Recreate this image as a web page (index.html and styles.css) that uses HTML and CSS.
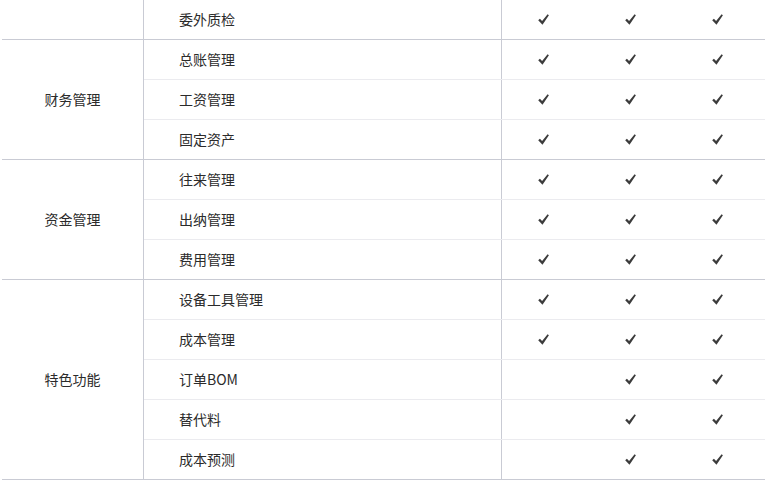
FILE: index.html
```html
<!DOCTYPE html>
<html lang="zh">
<head>
<meta charset="utf-8">
<link rel="stylesheet" href="styles.css">
</head>
<body>
<svg width="0" height="0" class="defs">
  <defs>
    <symbol id="ck" viewBox="0 0 11 11">
      <path d="M0.2 6.2 L1.9 4.7 L4.1 7.1 L9.6 0.2 L10.9 1.3 L4.5 10.8 Z" fill="#3c3c3c"/>
    </symbol>
  </defs>
</svg>
<div class="table">
  <div class="group">
    <div class="gname"></div>
    <div class="rows">
      <div class="row"><div class="feat">委外质检</div><div class="c"><svg class="ck"><use href="#ck"/></svg></div><div class="c"><svg class="ck"><use href="#ck"/></svg></div><div class="c"><svg class="ck"><use href="#ck"/></svg></div></div>
    </div>
  </div>
  <div class="group">
    <div class="gname">财务管理</div>
    <div class="rows">
      <div class="row"><div class="feat">总账管理</div><div class="c"><svg class="ck"><use href="#ck"/></svg></div><div class="c"><svg class="ck"><use href="#ck"/></svg></div><div class="c"><svg class="ck"><use href="#ck"/></svg></div></div>
      <div class="row"><div class="feat">工资管理</div><div class="c"><svg class="ck"><use href="#ck"/></svg></div><div class="c"><svg class="ck"><use href="#ck"/></svg></div><div class="c"><svg class="ck"><use href="#ck"/></svg></div></div>
      <div class="row"><div class="feat">固定资产</div><div class="c"><svg class="ck"><use href="#ck"/></svg></div><div class="c"><svg class="ck"><use href="#ck"/></svg></div><div class="c"><svg class="ck"><use href="#ck"/></svg></div></div>
    </div>
  </div>
  <div class="group">
    <div class="gname">资金管理</div>
    <div class="rows">
      <div class="row"><div class="feat">往来管理</div><div class="c"><svg class="ck"><use href="#ck"/></svg></div><div class="c"><svg class="ck"><use href="#ck"/></svg></div><div class="c"><svg class="ck"><use href="#ck"/></svg></div></div>
      <div class="row"><div class="feat">出纳管理</div><div class="c"><svg class="ck"><use href="#ck"/></svg></div><div class="c"><svg class="ck"><use href="#ck"/></svg></div><div class="c"><svg class="ck"><use href="#ck"/></svg></div></div>
      <div class="row"><div class="feat">费用管理</div><div class="c"><svg class="ck"><use href="#ck"/></svg></div><div class="c"><svg class="ck"><use href="#ck"/></svg></div><div class="c"><svg class="ck"><use href="#ck"/></svg></div></div>
    </div>
  </div>
  <div class="group">
    <div class="gname">特色功能</div>
    <div class="rows">
      <div class="row"><div class="feat">设备工具管理</div><div class="c"><svg class="ck"><use href="#ck"/></svg></div><div class="c"><svg class="ck"><use href="#ck"/></svg></div><div class="c"><svg class="ck"><use href="#ck"/></svg></div></div>
      <div class="row"><div class="feat">成本管理</div><div class="c"><svg class="ck"><use href="#ck"/></svg></div><div class="c"><svg class="ck"><use href="#ck"/></svg></div><div class="c"><svg class="ck"><use href="#ck"/></svg></div></div>
      <div class="row"><div class="feat">订单BOM</div><div class="c"></div><div class="c"><svg class="ck"><use href="#ck"/></svg></div><div class="c"><svg class="ck"><use href="#ck"/></svg></div></div>
      <div class="row"><div class="feat">替代料</div><div class="c"></div><div class="c"><svg class="ck"><use href="#ck"/></svg></div><div class="c"><svg class="ck"><use href="#ck"/></svg></div></div>
      <div class="row"><div class="feat">成本预测</div><div class="c"></div><div class="c"><svg class="ck"><use href="#ck"/></svg></div><div class="c"><svg class="ck"><use href="#ck"/></svg></div></div>
    </div>
  </div>
</div>
</body>
</html>
```

FILE: styles.css
```css
html, body {
  margin: 0;
  padding: 0;
  background: #fff;
}
body {
  font-family: "Noto Sans CJK SC", "Noto Sans", sans-serif;
  font-size: 14px;
  color: #2b2b2b;
}
.defs {
  position: absolute;
  width: 0;
  height: 0;
}
.table {
  margin-left: 2px;
  width: 763px;
}
.group {
  display: flex;
  border-bottom: 1px solid #c9cbd4;
}
.gname {
  width: 141px;
  flex: none;
  border-right: 1px solid #c9cbd4;
  display: flex;
  align-items: center;
  justify-content: center;
  padding-bottom: 1px;
}
.rows {
  flex: 1;
  display: flex;
  flex-direction: column;
}
.row {
  display: flex;
  height: 39px;
  border-bottom: 1px solid #ebebef;
}
.row:last-child {
  border-bottom: none;
}
.feat {
  width: 322px;
  flex: none;
  padding-left: 35px;
  padding-bottom: 2px;
  border-right: 1px solid #c9cbd4;
  display: flex;
  align-items: center;
}
.c {
  width: 87px;
  flex: none;
  padding-right: 5px;
  box-sizing: border-box;
  display: flex;
  align-items: center;
  justify-content: center;
}
.ck {
  width: 11px;
  height: 11px;
  display: block;
}
```
